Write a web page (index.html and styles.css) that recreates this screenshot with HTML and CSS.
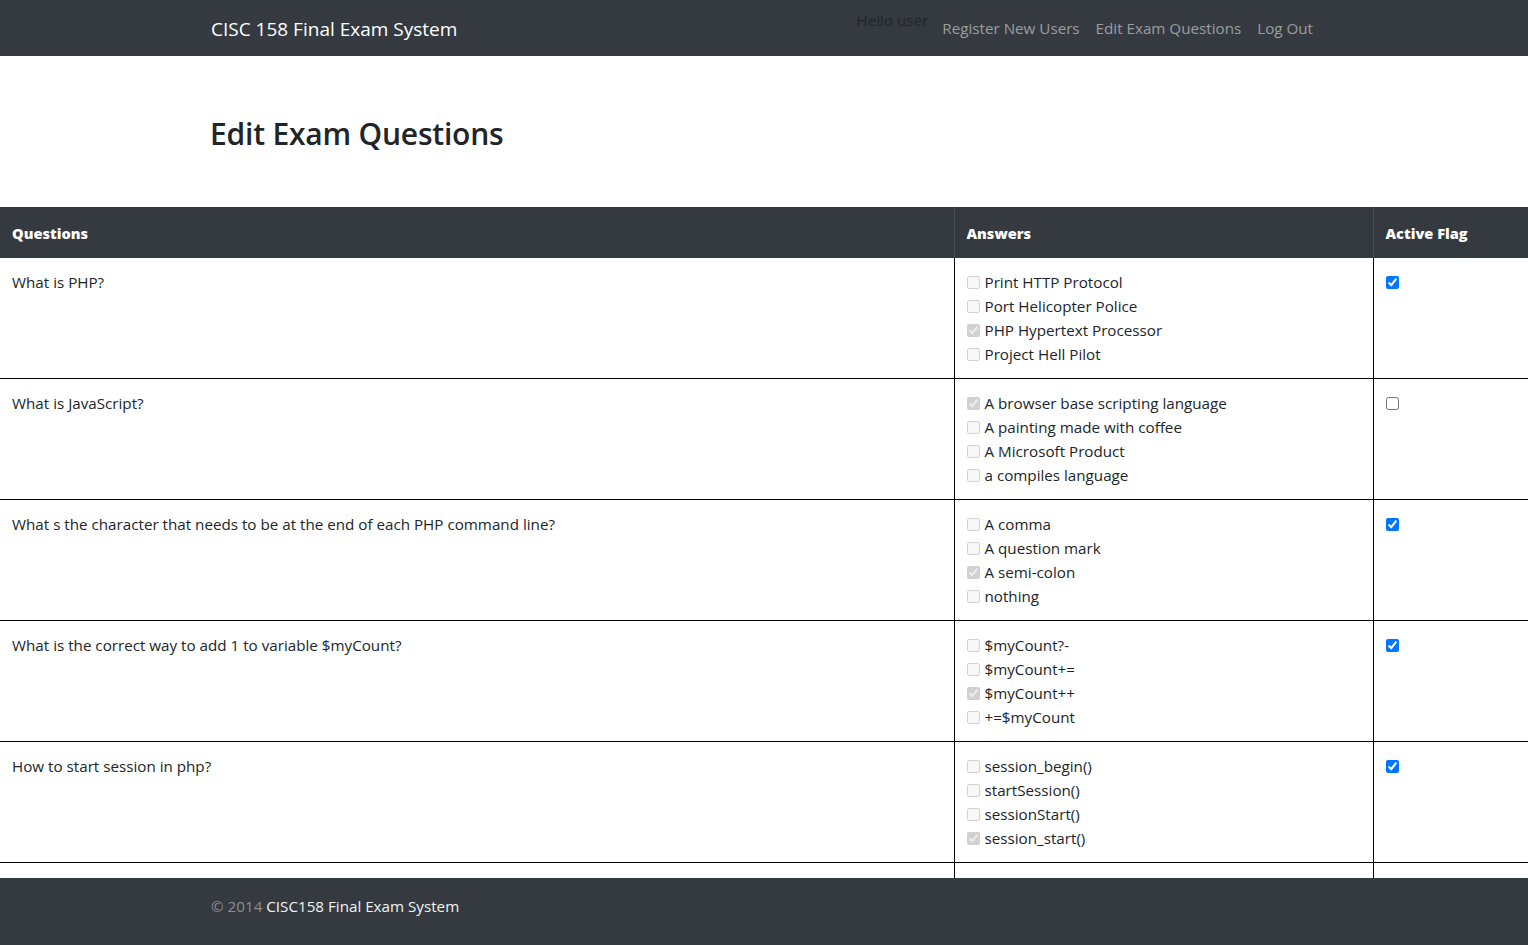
FILE: index.html
```html
<!DOCTYPE html>
<html lang="en">
<head>
<meta charset="utf-8">
<title>Edit Exam Questions - CISC 158 Final Exam System</title>
<link rel="stylesheet" href="styles.css">
</head>
<body>
<nav class="navbar">
  <div class="container nav-inner">
    <a class="brand" href="#">CISC 158 Final Exam System</a>
    <div class="nav-right">
      <span class="hello">Hello user</span>
      <a class="nav-link" href="#">Register New Users</a>
      <a class="nav-link" href="#">Edit Exam Questions</a>
      <a class="nav-link" href="#">Log Out</a>
    </div>
  </div>
</nav>

<section class="page-head">
  <div class="container">
    <h2 class="title">Edit Exam Questions</h2>
  </div>
</section>

<table class="exam-table">
  <colgroup>
    <col class="col-q">
    <col class="col-a">
    <col class="col-f">
  </colgroup>
  <thead>
    <tr>
      <th>Questions</th>
      <th>Answers</th>
      <th>Active Flag</th>
    </tr>
  </thead>
  <tbody>
    <tr>
      <td>What is PHP?</td>
      <td>
        <label class="ans"><input type="checkbox" disabled>Print HTTP Protocol</label>
        <label class="ans"><input type="checkbox" disabled>Port Helicopter Police</label>
        <label class="ans"><input type="checkbox" disabled checked>PHP Hypertext Processor</label>
        <label class="ans"><input type="checkbox" disabled>Project Hell Pilot</label>
      </td>
      <td><input class="flag" type="checkbox" checked></td>
    </tr>
    <tr>
      <td>What is JavaScript?</td>
      <td>
        <label class="ans"><input type="checkbox" disabled checked>A browser base scripting language</label>
        <label class="ans"><input type="checkbox" disabled>A painting made with coffee</label>
        <label class="ans"><input type="checkbox" disabled>A Microsoft Product</label>
        <label class="ans"><input type="checkbox" disabled>a compiles language</label>
      </td>
      <td><input class="flag" type="checkbox"></td>
    </tr>
    <tr>
      <td>What s the character that needs to be at the end of each PHP command line?</td>
      <td>
        <label class="ans"><input type="checkbox" disabled>A comma</label>
        <label class="ans"><input type="checkbox" disabled>A question mark</label>
        <label class="ans"><input type="checkbox" disabled checked>A semi-colon</label>
        <label class="ans"><input type="checkbox" disabled>nothing</label>
      </td>
      <td><input class="flag" type="checkbox" checked></td>
    </tr>
    <tr>
      <td>What is the correct way to add 1 to variable $myCount?</td>
      <td>
        <label class="ans"><input type="checkbox" disabled>$myCount?-</label>
        <label class="ans"><input type="checkbox" disabled>$myCount+=</label>
        <label class="ans"><input type="checkbox" disabled checked>$myCount++</label>
        <label class="ans"><input type="checkbox" disabled>+=$myCount</label>
      </td>
      <td><input class="flag" type="checkbox" checked></td>
    </tr>
    <tr>
      <td>How to start session in php?</td>
      <td>
        <label class="ans"><input type="checkbox" disabled>session_begin()</label>
        <label class="ans"><input type="checkbox" disabled>startSession()</label>
        <label class="ans"><input type="checkbox" disabled>sessionStart()</label>
        <label class="ans"><input type="checkbox" disabled checked>session_start()</label>
      </td>
      <td><input class="flag" type="checkbox" checked></td>
    </tr>
    <tr class="more-row">
      <td></td>
      <td></td>
      <td></td>
    </tr>
  </tbody>
</table>

<footer class="footer">
  <div class="container">
    <span class="copy">&copy; 2014</span> <span class="foot-name">CISC158 Final Exam System</span>
  </div>
</footer>
</body>
</html>
```

FILE: styles.css
```css
* { box-sizing: border-box; }

html, body {
  margin: 0;
  padding: 0;
}

body {
  font-family: "Open Sans", "Noto Sans", "Liberation Sans", sans-serif;
  font-size: 15.2px;
  line-height: 24px;
  color: #212529;
  background: #fff;
  padding-bottom: 67px;
}

.container {
  width: 1140px;
  margin: 0 auto;
  padding: 0 15px;
}

/* navbar */
.navbar {
  background: #343a40;
  height: 56px;
}

.nav-inner {
  display: flex;
  align-items: center;
  justify-content: space-between;
  height: 56px;
}

.brand {
  color: #fff;
  font-size: 19px;
  line-height: 30px;
  text-decoration: none;
  padding-left: 2px;
  margin-top: 2px;
}

.nav-right {
  display: flex;
  align-items: center;
  height: 56px;
  margin-right: -2px;
}

.hello {
  color: #212529;
  align-self: flex-start;
  padding-top: 8px;
  margin-right: 6px;
}

.nav-link {
  color: rgba(255, 255, 255, 0.5);
  text-decoration: none;
  padding: 0 8px;
}

/* heading */
.page-head {
  padding: 59px 0 54px;
}

.title {
  margin: 0;
  font-size: 30px;
  font-weight: 600;
  line-height: 38px;
  letter-spacing: -0.2px;
  padding-left: 1px;
}

/* table */
.exam-table {
  width: 100%;
  border-collapse: collapse;
  table-layout: fixed;
}

.col-q { width: 954px; }
.col-a { width: 419px; }
.col-f { width: auto; }

.exam-table th {
  background: #343a40;
  color: #fff;
  font-size: 14.6px;
  font-weight: 800;
  text-align: left;
  padding: 12px;
  height: 51px;
  border: 1px solid #454d55;
  border-top: 0;
  border-bottom: 0;
}

.exam-table th:first-child { border-left: 0; }
.exam-table th:last-child { border-right: 0; }

.exam-table td {
  vertical-align: top;
  padding: 12px;
  border: 1px solid #000;
  border-top: 0;
}

.exam-table td:first-child { border-left: 0; }
.exam-table td:last-child { border-right: 0; }

.more-row td {
  height: 60px;
}

.ans {
  display: flex;
  align-items: center;
  height: 24px;
}

.ans input {
  width: 13px;
  height: 13px;
  margin: 0 5px 0 0;
}

.flag {
  width: 13px;
  height: 13px;
  margin: 6px 0 0 0;
  display: block;
}

/* footer */
.footer {
  position: fixed;
  left: 0;
  right: 0;
  bottom: 0;
  height: 67px;
  background: #343a40;
  padding-top: 16px;
}

.copy {
  color: #8b8f93;
  padding-left: 2px;
}

.foot-name {
  color: #f2f2f2;
}
```
